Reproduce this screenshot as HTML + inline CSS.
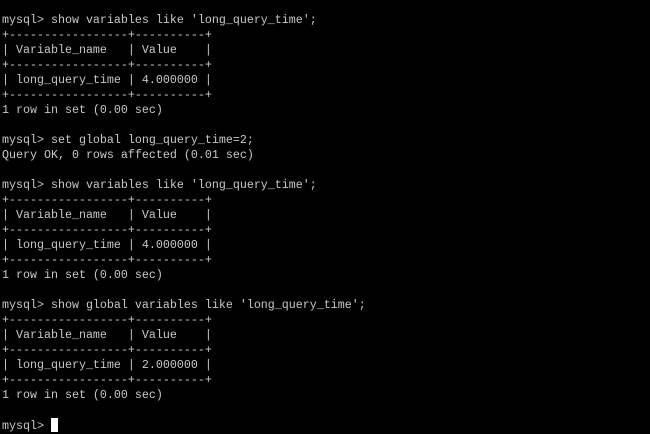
<!DOCTYPE html>
<html><head><style>
html,body{margin:0;padding:0;background:#000;width:650px;height:433px;overflow:hidden}
pre{margin:0;position:absolute;left:2px;top:13px;font-family:"Liberation Mono",monospace;font-size:11.67px;line-height:15px;color:#c8c8c8}
.c{display:inline-block;width:7px;height:14px;background:#fff;vertical-align:-3px;margin-left:0}
</style></head><body><pre>mysql&gt; show variables like 'long_query_time';
+-----------------+----------+
| Variable_name   | Value    |
+-----------------+----------+
| long_query_time | 4.000000 |
+-----------------+----------+
1 row in set (0.00 sec)

mysql&gt; set global long_query_time=2;
Query OK, 0 rows affected (0.01 sec)

mysql&gt; show variables like 'long_query_time';
+-----------------+----------+
| Variable_name   | Value    |
+-----------------+----------+
| long_query_time | 4.000000 |
+-----------------+----------+
1 row in set (0.00 sec)

mysql&gt; show global variables like 'long_query_time';
+-----------------+----------+
| Variable_name   | Value    |
+-----------------+----------+
| long_query_time | 2.000000 |
+-----------------+----------+
1 row in set (0.00 sec)

mysql&gt; <span class="c"></span></pre></body></html>
